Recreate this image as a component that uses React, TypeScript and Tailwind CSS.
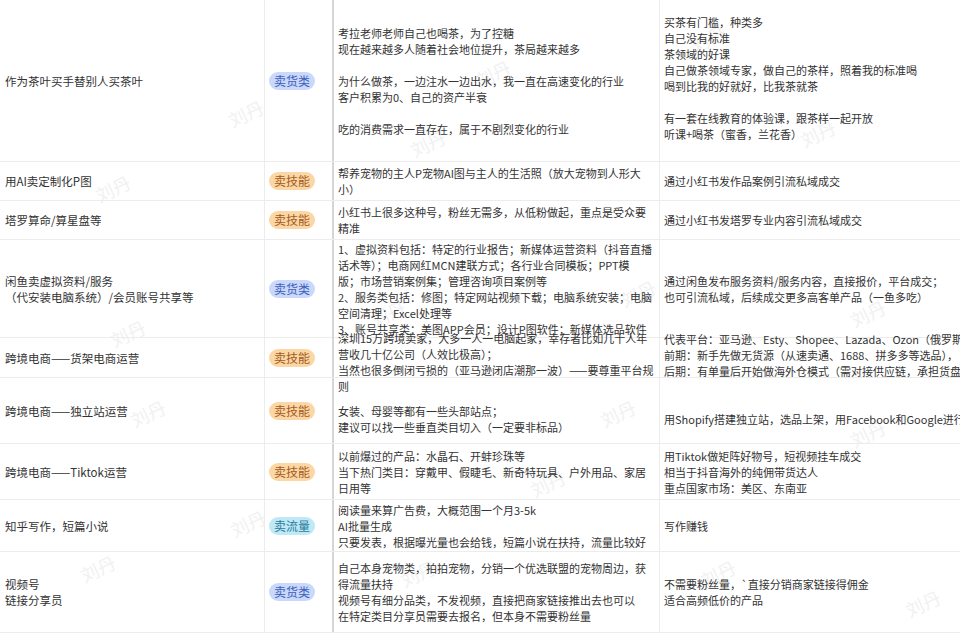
import React from "react";

type Badge = "货" | "技" | "流";
const badgeCls: Record<Badge, string> = {
  货: "bg-[#c9d8fb] text-[#3f5fb8]",
  技: "bg-[#fbd7a6] text-[#a55a1c]",
  流: "bg-[#bfe9f7] text-[#2b7c9c]",
};
const badgeText: Record<Badge, string> = { 货: "卖货类", 技: "卖技能", 流: "卖流量" };

type Row = { h: number; a: string[]; b: Badge; c: string[]; d: string[]; cTop?: string; dTop?: string };

const rows: Row[] = [
  {
    h: 162,
    a: ["作为茶叶买手替别人买茶叶"],
    b: "货",
    c: ["考拉老师老师自己也喝茶，为了控糖", "现在越来越多人随着社会地位提升，茶局越来越多", "", "为什么做茶，一边注水一边出水，我一直在高速变化的行业", "客户积累为0、自己的资产半衰", "", "吃的消费需求一直存在，属于不剧烈变化的行业"],
    d: ["买茶有门槛，种类多", "自己没有标准", "茶领域的好课", "自己做茶领域专家，做自己的茶样，照着我的标准喝", "喝到比我的好就好，比我茶就茶", "", "有一套在线教育的体验课，跟茶样一起开放", "听课+喝茶（蜜香，兰花香）"],
    cTop: "pt-[25px]",
    dTop: "pt-[14px]",
  },
  { h: 39, a: ["用AI卖定制化P图"], b: "技", c: ["帮养宠物的主人P宠物AI图与主人的生活照（放大宠物到人形大", "小）"], d: ["通过小红书发作品案例引流私域成交"] },
  { h: 39, a: ["塔罗算命/算星盘等"], b: "技", c: ["小红书上很多这种号，粉丝无需多，从低粉做起，重点是受众要", "精准"], d: ["通过小红书发塔罗专业内容引流私域成交"] },
  {
    h: 98,
    a: ["闲鱼卖虚拟资料/服务", "（代安装电脑系统）/会员账号共享等"],
    b: "货",
    c: ["1、虚拟资料包括：特定的行业报告；新媒体运营资料（抖音直播", "话术等）；电商网红MCN建联方式；各行业合同模板；PPT模", "版；市场营销案例集；管理咨询项目案例等", "2、服务类包括：修图；特定网站视频下载；电脑系统安装；电脑", "空间清理；Excel处理等", "3、账号共享类：美图APP会员；设计P图软件；新媒体选品软件"],
    d: ["通过闲鱼发布服务资料/服务内容，直接报价，平台成交；", "也可引流私域，后续成交更多高客单产品（一鱼多吃）"],
    cTop: "pt-[1px]",
  },
  {
    h: 40,
    a: ["跨境电商——货架电商运营"],
    b: "技",
    c: ["深圳15万跨境卖家，大多一人一电脑起家，幸存者比如几十人年", "营收几十亿公司（人效比极高）；", "当然也很多倒闭亏损的（亚马逊闭店潮那一波）——要尊重平台规", "则"],
    d: ["代表平台：亚马逊、Esty、Shopee、Lazada、Ozon（俄罗斯）", "前期：新手先做无货源（从速卖通、1688、拼多多等选品），", "后期：有单量后开始做海外仓模式（需对接供应链，承担货盘）"],
    cTop: "-mt-[8px] pt-0",
    dTop: "-mt-[7px]",
  },
  { h: 66, a: ["跨境电商——独立站运营"], b: "技", c: ["", "女装、母婴等都有一些头部站点；", "建议可以找一些垂直类目切入（一定要非标品）"], d: ["", "用Shopify搭建独立站，选品上架，用Facebook和Google进行推广"] },
  { h: 56, a: ["跨境电商——Tiktok运营"], b: "技", c: ["以前爆过的产品：水晶石、开蚌珍珠等", "当下热门类目：穿戴甲、假睫毛、新奇特玩具、户外用品、家居", "日用等"], d: ["用Tiktok做矩阵好物号，短视频挂车成交", "相当于抖音海外的纯佣带货达人", "重点国家市场：美区、东南亚"] },
  { h: 52, a: ["知乎写作，短篇小说"], b: "流", c: ["阅读量来算广告费，大概范围一个月3-5k", "AI批量生成", "只要发表，根据曝光量也会给钱，短篇小说在扶持，流量比较好"], d: ["写作赚钱"] },
  { h: 81, a: ["视频号", "链接分享员"], b: "货", c: ["自己本身宠物类，拍拍宠物，分销一个优选联盟的宠物周边，获", "得流量扶持", "视频号有细分品类，不发视频，直接把商家链接推出去也可以", "在特定类目分享员需要去报名，但本身不需要粉丝量"], d: ["不需要粉丝量，`直接分销商家链接得佣金", "适合高频低价的产品"] },
];

const Lines = ({ l }: { l: string[] }) => (
  <>
    {l.map((t, i) => (
      <div key={i} className="whitespace-nowrap h-[16px]">{t || "\u00a0"}</div>
    ))}
  </>
);

const marks = [
  [228, 100], [95, 175], [475, 60], [690, 25], [800, 120], [110, 320], [370, 300], [620, 280], [850, 300], [130, 400], [600, 400], [850, 420], [80, 555], [400, 560], [700, 560], [905, 590], [410, 130], [230, 510], [530, 470],
];

export default function App() {
  return (
    <div
      className="relative w-[960px] h-[637px] overflow-hidden bg-white text-[11px] text-[#333]"
      style={{ fontFamily: '"Noto Sans CJK SC", "Noto Sans", sans-serif' }}
    >
      {marks.map(([x, y], i) => (
        <div key={i} className="absolute text-[18px] text-[#f1f1f1] -rotate-[25deg] pointer-events-none" style={{ left: x, top: y }}>
          刘丹
        </div>
      ))}
      <div className="relative flex flex-col">
        {rows.map((r, i) => (
          <div key={i} className="flex border-b border-[#ececec]" style={{ height: r.h }}>
            <div className="w-[265px] shrink-0 pl-[5px] flex flex-col justify-center border-r border-[#ececec] leading-[16px] text-[11.5px]">
              <Lines l={r.a} />
            </div>
            <div className="w-[67px] shrink-0 flex items-center pl-[4px]">
              <span className={`rounded-full px-[5px] h-[18px] leading-[18px] text-[12px] ${badgeCls[r.b]}`}>{badgeText[r.b]}</span>
            </div>
            <div className={`w-[328px] shrink-0 border-l-2 border-[#d6d6d6] border-r border-r-[#ececec] pl-[4px] flex flex-col leading-[16px] overflow-x-clip ${r.cTop ? r.cTop : "justify-center"}`}>
              <Lines l={r.c} />
            </div>
            <div className={`flex-1 pl-[4px] flex flex-col leading-[16px] overflow-x-clip ${r.dTop ? r.dTop : "justify-center"}`}>
              <Lines l={r.d} />
            </div>
          </div>
        ))}
      </div>
    </div>
  );
}
